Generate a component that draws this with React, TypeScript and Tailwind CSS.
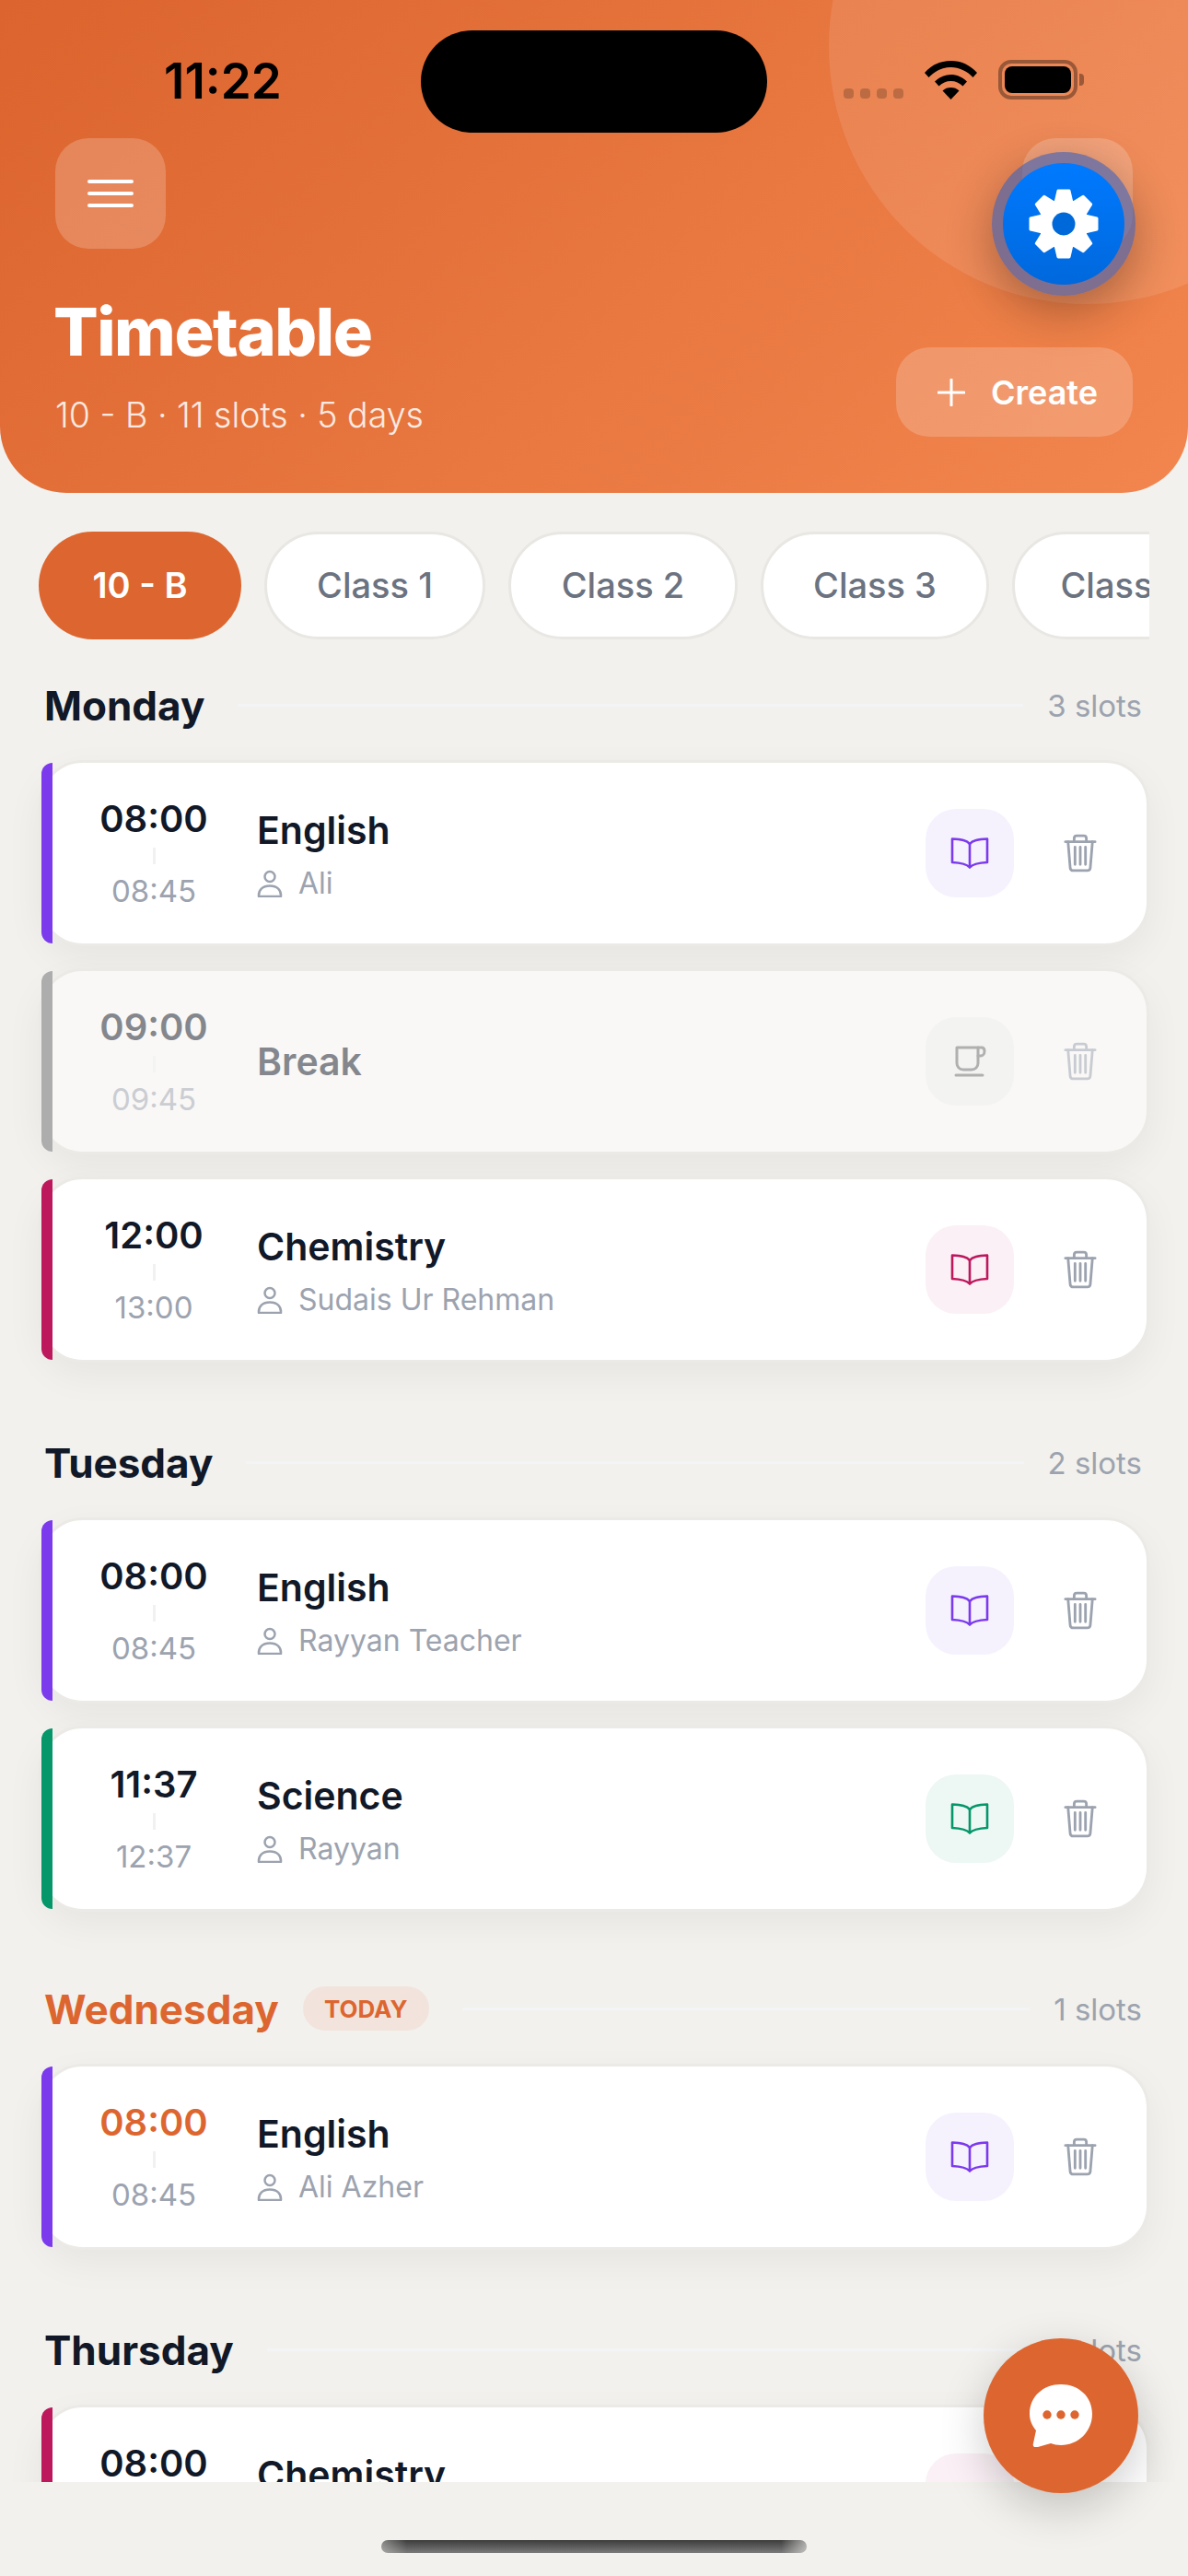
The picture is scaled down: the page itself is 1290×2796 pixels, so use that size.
const font = "font-['Inter',sans-serif]";

type Slot = { start: string; end: string; name: string; who?: string; color: string; tint: string; today?: boolean; muted?: boolean };

const purple = "#7c3aed";
const pink = "#be185d";
const green = "#059669";

const days: { day: string; count: string; gap: string; today?: boolean; slots: Slot[] }[] = [
  {
    day: "Monday",
    count: "3 slots",
    gap: "mt-[43px]",
    slots: [
      { start: "08:00", end: "08:45", name: "English", who: "Ali", color: purple, tint: "#f5f2fe" },
      { start: "09:00", end: "09:45", name: "Break", color: "#adadad", tint: "#f3f3f1", muted: true },
      { start: "12:00", end: "13:00", name: "Chemistry", who: "Sudais Ur Rehman", color: pink, tint: "#faf0f5" },
    ],
  },
  {
    day: "Tuesday",
    count: "2 slots",
    gap: "mt-[80px]",
    slots: [
      { start: "08:00", end: "08:45", name: "English", who: "Rayyan Teacher", color: purple, tint: "#f5f2fe" },
      { start: "11:37", end: "12:37", name: "Science", who: "Rayyan", color: green, tint: "#edf7f4" },
    ],
  },
  {
    day: "Wednesday",
    count: "1 slots",
    gap: "mt-[77px]",
    today: true,
    slots: [{ start: "08:00", end: "08:45", name: "English", who: "Ali Azher", color: purple, tint: "#f5f2fe", today: true }],
  },
  {
    day: "Thursday",
    count: "1 slots",
    gap: "mt-[80px]",
    slots: [{ start: "08:00", end: "08:45", name: "Chemistry", who: "Ali", color: pink, tint: "#faf0f5" }],
  },
];

const classes = [
  { label: "Class 1", w: "w-[240px]" },
  { label: "Class 2", w: "w-[249px]" },
  { label: "Class 3", w: "w-[248px]" },
  { label: "Class 4", w: "w-[240px]" },
];

function Book({ color }: { color: string }) {
  return (
    <svg width="42" height="36" viewBox="0 0 42 36" fill="none" stroke={color} strokeWidth="2.600" strokeLinejoin="round" strokeLinecap="round">
      <path d="M21 8C18 4 12 3 2 2.500V28C12 28.500 18 30 21 33.500C24 30 30 28.500 40 28V2.500C30 3 24 4 21 8Z" />
      <path d="M21 8V33" />
    </svg>
  );
}

function Cup({ color }: { color: string }) {
  return (
    <svg width="36" height="34" viewBox="0 0 36 34" fill="none" stroke={color} strokeWidth="3" strokeLinejoin="round" strokeLinecap="round">
      <path d="M4 2H27V19C27 23 24 26 20 26H11C7 26 4 23 4 19V2Z" />
      <path d="M27 2H31C33 2 34 4 34 6C34 9 32 11 30 11H27" />
      <path d="M3 32H32" />
    </svg>
  );
}

function Trash({ color }: { color: string }) {
  return (
    <svg width="38" height="44" viewBox="0 0 38 44" fill="none" stroke={color} strokeWidth="3" strokeLinejoin="round" strokeLinecap="round">
      <path d="M2 9H36" />
      <path d="M12 8V5C12 3 13 2 15 2H23C25 2 26 3 26 5V8" />
      <path d="M5 9L7.500 39C7.700 41 9 42 11 42H27C29 42 30.300 41 30.500 39L33 9" />
      <path d="M13 15V35M19 15V35M25 15V35" />
    </svg>
  );
}

function Person() {
  return (
    <svg width="28" height="30" viewBox="0 0 28 30" fill="none" stroke="#9ca3af" strokeWidth="2.500">
      <circle cx="14" cy="7.500" r="5.500" />
      <path d="M2 29C1.500 22 6 17.500 14 17.500C22 17.500 26.500 22 26 29H2Z" strokeLinejoin="round" />
    </svg>
  );
}

function Card({ s }: { s: Slot }) {
  const o = s.muted ? "opacity-50" : "";
  return (
    <div className={`relative flex h-[202px] shrink-0 items-center rounded-[48px] border-[3px] border-[#ebeae6] pl-[62px] pr-[54px] shadow-[0_14px_40px_rgba(0,0,0,0.05)] ${s.muted ? "bg-[#f9f8f6]" : "bg-white"}`}>
      <div className="absolute bottom-0 left-0 top-0 w-3 rounded-l-[12px]" style={{ background: s.color }} />
      <div className={`flex w-[120px] flex-col items-center ${o}`}>
        <span className={`text-[40px] font-semibold leading-[46px] ${s.today ? "text-[#dd6630]" : "text-[#111827]"}`}>{s.start}</span>
        <span className="mb-[9px] mt-[8px] h-[18px] w-[3px] bg-[#f1f1f1]" />
        <span className="text-[33px] leading-[40px] text-[#9ca3af]">{s.end}</span>
      </div>
      <div className={`ml-[52px] flex min-w-0 flex-1 flex-col ${o}`}>
        <span className="text-[41px] font-semibold leading-[50px] text-[#111827]">{s.name}</span>
        {s.who && (
          <span className="mt-[15px] flex items-center gap-[17px] text-[32px] leading-[36px] text-[#9ca3af]">
            <Person />
            {s.who}
          </span>
        )}
      </div>
      <div className="flex h-24 w-24 items-center justify-center rounded-[33px]" style={{ background: s.tint }}>
        {s.muted ? <Cup color="#b0b0b0" /> : <Book color={s.color} />}
      </div>
      <div className="ml-[54px] flex w-[36px] justify-center">
        <Trash color={s.muted ? "#c8ccd2" : "#9ca3af"} />
      </div>
    </div>
  );
}

export default function App() {
  return (
    <div className={`relative flex h-[2796px] w-[1290px] flex-col overflow-hidden bg-[#f2f1ed] ${font}`}>
      <header className="relative h-[535px] shrink-0 overflow-hidden rounded-b-[72px] bg-[linear-gradient(135deg,#dc642e,#f2864e)]">
        <div className="absolute left-[900px] top-[-230px] h-[560px] w-[560px] rounded-full bg-white/10" />
        <div className="relative flex h-[150px] items-start pt-[60px]">
          <span className="ml-[178px] text-[53px] font-semibold leading-[56px] text-black">11:22</span>
          <div className="ml-auto mr-[113px] mt-[5px] flex items-end gap-[23px]">
            <div className="flex gap-[7px] pb-[1px]">
              <span className="h-[11px] w-[11px] rounded-[4px] bg-black/20" />
              <span className="h-[11px] w-[11px] rounded-[4px] bg-black/20" />
              <span className="h-[11px] w-[11px] rounded-[4px] bg-black/20" />
              <span className="h-[11px] w-[11px] rounded-[4px] bg-black/20" />
            </div>
            <svg width="57" height="42" viewBox="0 0 57 42" className="fill-black">
              <path d="M28.500 0C39.500 0 49.500 4.500 57 13L52.500 18C46 11 37.500 7 28.500 7C19.500 7 11 11 4.500 18L0 13C7.500 4.500 17.500 0 28.500 0Z" />
              <path d="M28.500 15C35 15 41 17.500 46 22.500L41.500 27.500C38 24 33.500 22 28.500 22C23.500 22 19 24 15.500 27.500L11 22.500C16 17.500 22 15 28.500 15Z" />
              <path d="M28.500 29C32 29 35 30 37.500 32.500L28.500 42L19.500 32.500C22 30 25 29 28.500 29Z" />
            </svg>
            <div className="flex items-center gap-[2px]">
              <div className="h-[43px] w-[86px] rounded-[14px] border-[4px] border-black/35 p-[3px]">
                <div className="h-full w-full rounded-[8px] bg-black" />
              </div>
              <span className="h-[13px] w-[5px] rounded-r-[4px] bg-black/35" />
            </div>
          </div>
        </div>
        <div className="relative flex justify-between px-[60px]">
          <button className="flex h-[120px] w-[120px] items-center justify-center rounded-[36px] bg-white/20">
            <svg width="50" height="30" viewBox="0 0 50 30" stroke="white" strokeWidth="4" strokeLinecap="round">
              <path d="M2 2H48M2 15H48M2 28H48" />
            </svg>
          </button>
          <button className="h-[120px] w-[120px] rounded-[36px] bg-white/20" />
        </div>
        <div className="relative mt-[46px] flex items-end justify-between px-[60px]">
          <div className="flex flex-col">
            <h1 className="ml-[-2px] text-[72px] font-extrabold leading-[88px] tracking-[-1.500px] text-white">Timetable</h1>
            <p className="mt-[24px] text-[37.500px] font-light leading-[46px] text-white/85">10 - B · 11 slots · 5 days</p>
          </div>
          <button className="flex h-[97px] w-[257px] items-center gap-[28px] rounded-[36px] bg-white/20 pl-[45px] text-[36px] font-semibold text-white">
            <svg width="30" height="30" viewBox="0 0 30 30" stroke="white" strokeWidth="3" strokeLinecap="round">
              <path d="M15 1V29M1 15H29" />
            </svg>
            Create
          </button>
        </div>
      </header>

      <div className="flex h-[2159px] shrink-0 flex-col overflow-hidden pl-[42px] pr-[42px]">
        <div className="mt-[42px] flex shrink-0 gap-[25px] overflow-hidden">
          <span className="flex h-[117px] w-[220px] shrink-0 items-center justify-center rounded-full bg-[#dd6630] text-[38px] font-semibold text-white">10 - B</span>
          {classes.map((c) => (
            <span key={c.label} className={`flex h-[117px] shrink-0 items-center justify-center rounded-full border-[3px] border-[#e8e7e3] bg-white text-[38px] font-medium text-[#6b7280] ${c.w}`}>
              {c.label}
            </span>
          ))}
        </div>
        {days.map((d) => (
          <section key={d.day} className={`flex shrink-0 flex-col ${d.gap}`}>
            <div className="mb-[32px] flex h-[56px] items-center pl-[6px] pr-[8px]">
              <h2 className={`pt-[2px] text-[44px] font-bold leading-[56px] ${d.today ? "text-[#dd6630]" : "text-[#111827]"}`}>{d.day}</h2>
              {d.today && (
                <span className="ml-[26px] flex h-[48px] w-[137px] items-center justify-center rounded-full bg-[#f2e4dc] text-[26px] font-bold text-[#dd6630]">TODAY</span>
              )}
              <span className="ml-[36px] mr-[26px] h-[3px] flex-1 bg-[#f3f4f6]" />
              <span className="pt-[3px] text-[33px] text-[#9ca3af]">{d.count}</span>
            </div>
            <div className="flex flex-col gap-[24px]">
              {d.slots.map((s) => (
                <Card key={s.start + s.name} s={s} />
              ))}
            </div>
          </section>
        ))}
      </div>

      <div className="flex flex-1 justify-center bg-[#f2f1ed] pt-[63px]">
        <span className="h-[14px] w-[462px] rounded-full bg-[linear-gradient(90deg,rgba(242,241,237,0.4),transparent_6%,transparent_94%,rgba(242,241,237,0.6)),linear-gradient(180deg,#3c3c3c,#7a7a7a)]" />
      </div>

      <div className="absolute left-[457px] top-[33px] h-[111px] w-[376px] rounded-[56px] bg-black" />

      <div className="absolute left-[1077px] top-[165px] flex h-[156px] w-[156px] items-center justify-center rounded-full bg-[rgba(50,90,180,0.6)] shadow-[0_16px_50px_rgba(0,0,0,0.3)]">
        <div className="flex h-[132px] w-[132px] items-center justify-center rounded-full bg-[linear-gradient(180deg,#007aff,#0068dc)]">
          <svg width="78" height="78" viewBox="0 0 78 78">
            <g fill="white" stroke="white" strokeWidth="3" strokeLinejoin="round">
              {[0, 45, 90, 135, 180, 225, 270, 315].map((a) => (
                <polygon key={a} points="30,16 33,3 45,3 48,16" transform={`rotate(${a} 39 39)`} />
              ))}
            </g>
            <circle cx="39" cy="39" r="27" fill="white" />
            <circle cx="39" cy="39" r="12.500" fill="#0069d9" />
          </svg>
        </div>
      </div>

      <div className="absolute left-[1068px] top-[2538px] flex h-[168px] w-[168px] items-center justify-center rounded-full bg-[#dd6630] shadow-[0_16px_50px_rgba(0,0,0,0.2)]">
        <svg width="70" height="68" viewBox="0 0 70 68">
          <path fill="white" d="M35 0C54 0 69 13 69 32C69 51 54 66 35 66C31 66 27 65 24 64L10 68C6 69 4 67 5 64L8 50C3 44 1 38 1 32C1 13 16 0 35 0Z" />
          <circle cx="20" cy="33" r="4.700" fill="#dd6630" />
          <circle cx="35" cy="33" r="4.700" fill="#dd6630" />
          <circle cx="50" cy="33" r="4.700" fill="#dd6630" />
        </svg>
      </div>
    </div>
  );
}
